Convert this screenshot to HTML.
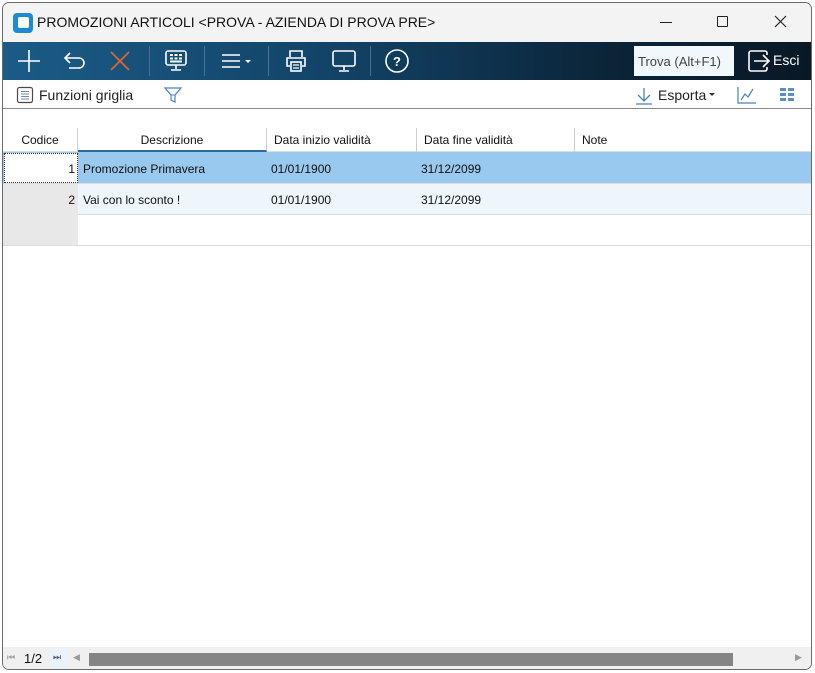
<!DOCTYPE html>
<html><head><meta charset="utf-8"><style>
*{margin:0;padding:0;box-sizing:border-box}
body{width:815px;height:673px;overflow:hidden;background:#fff;font-family:"Liberation Sans",sans-serif;position:relative}
.win{position:absolute;left:2px;top:2px;width:810px;height:668px;border:1px solid #6b6b6b;border-radius:7px;overflow:hidden;background:#fff}
.title{position:absolute;left:0;top:0;width:100%;height:39px;background:#f3f3f3}
.title .t{position:absolute;left:34px;top:11px;font-size:14px;color:#111}
.tb{position:absolute;left:0;top:39px;width:100%;height:38px;background:linear-gradient(90deg,#1b5b87 0%,#124468 40%,#0b2438 75%,#0a1826 100%)}
.sep{position:absolute;top:4px;width:1px;height:30px;background:#4a7290}
.tb svg{position:absolute}
.sb{position:absolute;left:0;top:77px;width:100%;height:29px;border-bottom:1px solid #8a8a8a}
.sb span{position:absolute;font-size:14px;color:#222;top:7px}
.grid{position:absolute;left:0;top:125px;width:100%}
.hd{position:absolute;top:0;height:24px;font-size:12px;color:#111;border-right:1px solid #ccc;border-bottom:1px solid #ddd;padding-top:5px}
.cell{position:absolute;font-size:12px;color:#111}
</style></head><body>
<div class="win">
 <div class="title">
  <svg style="position:absolute;left:10px;top:10px" width="20" height="20"><rect x="0" y="0" width="20" height="20" rx="4" fill="#1e8ad6"/><rect x="5" y="4" width="11" height="11" rx="2" fill="#fff"/></svg>
  <div class="t">PROMOZIONI ARTICOLI &lt;PROVA - AZIENDA DI PROVA PRE&gt;</div>
  <div style="position:absolute;left:657px;top:19px;width:12px;height:1px;background:#222"></div>
  <div style="position:absolute;left:714px;top:13px;width:11px;height:11px;border:1px solid #222;border-radius:1px"></div>
  <svg style="position:absolute;left:771px;top:12px" width="13" height="13"><path d="M1 1L12 12M12 1L1 12" stroke="#222" stroke-width="1.2"/></svg>
 </div>
 <div class="tb">
  <svg style="left:14px;top:7px" width="24" height="24"><path d="M12 1V23M1 12H23" stroke="#fff" stroke-width="1.6"/></svg>
  <svg style="left:60px;top:8px" width="24" height="22"><path d="M7 3L2 8L7 13M2 8H16a5 5 0 0 1 0 10H6" stroke="#fff" stroke-width="1.6" fill="none"/></svg>
  <svg style="left:106px;top:8px" width="22" height="22"><path d="M2 2L20 20M20 2L2 20" stroke="#e0652b" stroke-width="1.7"/></svg>
  <div class="sep" style="left:146px"></div>
  <svg style="left:161px;top:7px" width="24" height="24"><rect x="2" y="2" width="20" height="14" rx="2" fill="none" stroke="#fff" stroke-width="1.6"/><path d="M6 6h3M10.5 6h3M15 6h3M6 9.5h3M10.5 9.5h3M15 9.5h3M6 12.5h12" stroke="#fff" stroke-width="2"/><path d="M12 16v4M7 21h10" stroke="#fff" stroke-width="1.6"/></svg>
  <div class="sep" style="left:201px"></div>
  <svg style="left:218px;top:10px" width="36" height="18"><path d="M1 3H19M1 9H19M1 15H19" stroke="#fff" stroke-width="1.6"/><path d="M24 8h6l-3 3z" fill="#fff"/></svg>
  <div class="sep" style="left:265px"></div>
  <svg style="left:281px;top:7px" width="24" height="24"><path d="M6 8V2h12v6M6 17H3V9h18v8h-3" fill="none" stroke="#fff" stroke-width="1.6"/><rect x="7" y="13" width="10" height="9" fill="none" stroke="#fff" stroke-width="1.6"/><path d="M9 16h6M9 19h6" stroke="#fff" stroke-width="1.2"/></svg>
  <svg style="left:328px;top:7px" width="26" height="24"><rect x="2" y="2" width="22" height="15" rx="2" fill="none" stroke="#fff" stroke-width="1.6"/><path d="M13 17v4M8 22h10" stroke="#fff" stroke-width="1.6"/></svg>
  <div class="sep" style="left:367px"></div>
  <svg style="left:381px;top:6px" width="26" height="26"><circle cx="13" cy="13" r="11" fill="none" stroke="#fff" stroke-width="1.6"/><text x="13" y="18" font-size="13" font-weight="bold" fill="#fff" text-anchor="middle" font-family="Liberation Sans">?</text></svg>
  <div style="position:absolute;left:631px;top:4px;width:100px;height:30px;background:#f0f7fd;font-size:13px;color:#444;padding:8px 0 0 4px">Trova (Alt+F1)</div>
  <svg style="left:744px;top:7px" width="24" height="24"><path d="M10 2H4a2 2 0 0 0-2 2v16a2 2 0 0 0 2 2h6" fill="none" stroke="#fff" stroke-width="1.6"/><path d="M10 2h8a2 2 0 0 1 2 2v2M10 22h8a2 2 0 0 0 2-2v-2M7 12h15M16 6l6 6-6 6" fill="none" stroke="#fff" stroke-width="1.6"/></svg>
  <div style="position:absolute;left:770px;top:10px;font-size:14px;color:#fff">Esci</div>
 </div>
 <div class="sb">
  <svg style="position:absolute;left:13px;top:6px" width="18" height="18"><rect x="1.5" y="1.5" width="15" height="15" rx="2" fill="none" stroke="#4a4a4a" stroke-width="1.2"/><path d="M5 5.5h8M5 8h8M5 10.5h8M5 13h8" stroke="#6a8fb0" stroke-width="1"/></svg>
  <span style="left:36px">Funzioni griglia</span>
  <svg style="position:absolute;left:161px;top:6px" width="18" height="18"><path d="M1 2h16l-6 7v7l-4-2V9z" fill="none" stroke="#4a84b8" stroke-width="1.2"/><path d="M7 9h4" stroke="#4a84b8"/></svg>
  <svg style="position:absolute;left:632px;top:7px" width="18" height="18"><path d="M9 1v13M3 8l6 6 6-6M1 17h16" fill="none" stroke="#4a84b8" stroke-width="1.3"/></svg>
  <span style="left:655px">Esporta</span>
  <svg style="position:absolute;left:706px;top:13px" width="8" height="5"><path d="M0 0h6l-3 3z" fill="#333"/></svg>
  <svg style="position:absolute;left:734px;top:6px" width="20" height="18"><path d="M1 1v16h18M4 14l4-6 3 3 5-8" fill="none" stroke="#4a84b8" stroke-width="1.2"/></svg>
  <svg style="position:absolute;left:776px;top:7px" width="16" height="16" fill="#5a8fc4"><rect x="1" y="1" width="6" height="3"/><rect x="9" y="1" width="6" height="3"/><rect x="1" y="6" width="6" height="3"/><rect x="9" y="6" width="6" height="3"/><rect x="1" y="11" width="6" height="3"/><rect x="9" y="11" width="6" height="3"/></svg>
 </div>
 <div class="grid">
  <div class="hd" style="left:0;width:75px;text-align:center;">Codice</div>
  <div class="hd" style="left:75px;width:189px;text-align:center;border-bottom:2px solid #2a6a9a">Descrizione</div>
  <div class="hd" style="left:264px;width:150px;padding-left:7px">Data inizio validità</div>
  <div class="hd" style="left:414px;width:158px;padding-left:7px">Data fine validità</div>
  <div class="hd" style="left:572px;width:236px;padding-left:7px;border-right:none">Note</div>
  <div style="position:absolute;left:0;top:24px;width:808px;height:32px;background:#99c9ef;border-bottom:1px solid #ddd"></div>
  <div style="position:absolute;left:1px;top:25px;width:74px;height:30px;background:#fff;border:1px dotted #333"></div>
  <div style="position:absolute;left:0;top:56px;width:808px;height:31px;background:#eef6fc;border-bottom:1px solid #ddd"></div>
  <div style="position:absolute;left:0;top:56px;width:75px;height:31px;background:#e8e8e8"></div>
  <div style="position:absolute;left:0;top:87px;width:808px;height:31px;background:#fff;border-bottom:1px solid #ddd"></div>
  <div style="position:absolute;left:0;top:87px;width:75px;height:30px;background:#e8e8e8"></div>
  <div class="cell" style="left:0;width:72px;text-align:right;top:34px">1</div>
  <div class="cell" style="left:80px;top:34px">Promozione Primavera</div>
  <div class="cell" style="left:268px;top:34px">01/01/1900</div>
  <div class="cell" style="left:418px;top:34px">31/12/2099</div>
  <div class="cell" style="left:0;width:72px;text-align:right;top:65px">2</div>
  <div class="cell" style="left:80px;top:65px">Vai con lo sconto !</div>
  <div class="cell" style="left:268px;top:65px">01/01/1900</div>
  <div class="cell" style="left:418px;top:65px">31/12/2099</div>
 </div>
 <div style="position:absolute;left:0;top:644px;width:808px;height:22px;background:#f0f0f0"></div>
 <div style="position:absolute;left:4px;top:649px;font-size:9px;color:#999">⏮</div>
 <div style="position:absolute;left:21px;top:648px;font-size:13px;color:#111">1/2</div>
 <div style="position:absolute;left:47px;top:645px;width:18px;height:20px;background:#e8f3fc"></div>
 <div style="position:absolute;left:50px;top:649px;font-size:9px;color:#557">⏭</div>
 <div style="position:absolute;left:70px;top:649px;font-size:9px;color:#999">◀</div>
 <div style="position:absolute;left:86px;top:650px;width:644px;height:13px;background:#858585"></div>
 <div style="position:absolute;left:792px;top:649px;font-size:9px;color:#999">▶</div>
</div>
</body></html>
